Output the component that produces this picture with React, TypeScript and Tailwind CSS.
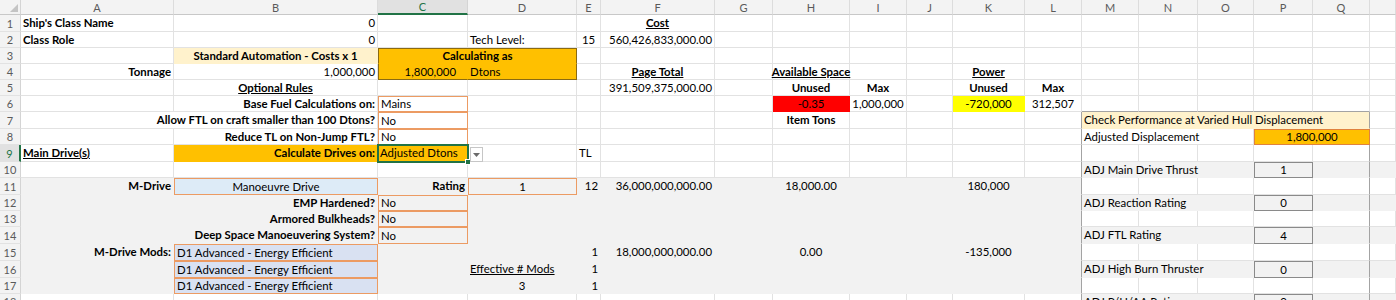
import React from 'react';
import { twMerge } from 'tailwind-merge';

type Cell = { t?: React.ReactNode; c?: string; x?: React.ReactNode };

const COLS =
  'grid grid-cols-[21px_153px_204px_90px_109px_24px_114px_58px_77px_57px_46px_72px_57px_57px_59px_56px_59px_57px_minmax(0,1fr)]';

const BASE =
  'flex items-center min-w-0 whitespace-nowrap px-[2px] border-r border-b border-[#e2e2e2] text-black';
const GRAY = 'bg-[#f2f2f2] border-[#f2f2f2]';
const BAND = 'bg-[#f2f2f2] border-[#f2f2f2]';
const PE = 'border-r-[#a3a3a3]';
const PT = 'border-b-[#a3a3a3]';
const BOX = 'border-l border-t border-[#ec9b63]';
const GBOX = 'bg-[#f2f2f2] border-l border-t border-[#ec9b63]';
const VBOX = 'justify-center bg-[#f2f2f2] border-l border-t border-[#8a8a8a]';
const CB = 'justify-center font-bold';
const RT = 'justify-end';
const CT = 'justify-center';

const e: Cell = {};
const g: Cell = { c: GRAY };
const gpe: Cell = { c: 'bg-[#f2f2f2] border-[#f2f2f2] border-r-[#a3a3a3]' };
const pe: Cell = { c: PE };
const bandPe: Cell = { c: 'bg-[#f2f2f2] border-[#f2f2f2] border-r-[#a3a3a3]' };
const band: Cell = { c: BAND };

function Selection() {
  return (
    <>
      <span className="pointer-events-none absolute -left-px -top-px -right-[2px] -bottom-[2px] border-2 border-[#217346]" />
      <span className="absolute -right-[4px] -bottom-[4px] h-[6px] w-[6px] bg-[#217346] border border-white" />
      <span className="absolute left-[calc(100%+3px)] top-[2px] h-[15px] w-[13px] bg-white border border-[#c6c6c6] flex items-center justify-center">
        <svg width="7" height="4" viewBox="0 0 7 4">
          <path d="M0 0H7L3.5 4Z" fill="#6b6b6b" />
        </svg>
      </span>
    </>
  );
}

function Row({ n, h, cells, sel }: { n: number; h: string; cells: Cell[]; sel?: boolean }) {
  return (
    <div className={twMerge(COLS, h)}>
      <div
        className={
          sel
            ? 'flex items-center justify-center text-[11px] bg-[#e1e1e1] text-[#217346] border-r-2 border-r-[#217346] border-b border-b-[#e2e2e2]'
            : 'flex items-center justify-center text-[11px] bg-[#f3f3f3] text-[#5a5a5a] border-r border-b border-r-[#d4d4d4] border-b-[#e2e2e2]'
        }
      >
        {n}
      </div>
      {cells.map((cell, i) => (
        <div key={i} className={twMerge(BASE, cell.c)}>
          {cell.t}
          {cell.x}
        </div>
      ))}
    </div>
  );
}

const LETTERS = ['A', 'B', 'C', 'D', 'E', 'F', 'G', 'H', 'I', 'J', 'K', 'L', 'M', 'N', 'O', 'P', 'Q', ''];

const rows: { h: string; cells: Cell[]; sel?: boolean }[] = [
  {
    h: 'h-[17px]',
    cells: [
      { t: "Ship's Class Name", c: 'font-bold' },
      { t: '0', c: RT },
      e, e, e,
      { t: 'Cost', c: 'justify-center font-bold underline' },
      e, e, e, e, e, e,
      e, e, e, e, e,
      e,
    ],
  },
  {
    h: 'h-[16px]',
    cells: [
      { t: 'Class Role', c: 'font-bold' },
      { t: '0', c: RT },
      e,
      { t: 'Tech Level:' },
      { t: '15', c: CT },
      { t: '560,426,833,000.00', c: RT },
      e, e, e, e, e, e,
      e, e, e, e, e,
      e,
    ],
  },
  {
    h: 'h-[16px]',
    cells: [
      e,
      { t: 'Standard Automation - Costs x 1', c: 'justify-center font-bold bg-[#fff2cc] border-[#fff2cc]' },
      {
        t: 'Calculating as',
        c: 'col-span-2 justify-center font-bold bg-[#ffc000] border-l border-t border-[#8a6a12] border-b-[#ffc000]',
      },
      e, e,
      e, e, e, e, e, e,
      e, e, e, e, e,
      e,
    ],
  },
  {
    h: 'h-[16px]',
    cells: [
      { t: 'Tonnage', c: 'justify-end font-bold' },
      { t: '1,000,000', c: RT },
      { t: '1,800,000', c: 'justify-end pr-[11px] bg-[#ffc000] border-l border-[#8a6a12] border-r-[#ffc000]' },
      { t: 'Dtons', c: 'bg-[#ffc000] border-[#8a6a12]' },
      e,
      { t: 'Page Total', c: 'justify-center font-bold underline' },
      e,
      { t: 'Available Space', c: 'justify-center font-bold underline' },
      e, e,
      { t: 'Power', c: 'justify-center font-bold underline' },
      e,
      e, e, e, e, e,
      e,
    ],
  },
  {
    h: 'h-[16px]',
    cells: [
      e,
      { t: 'Optional Rules', c: 'justify-center font-bold underline' },
      e, e, e,
      { t: '391,509,375,000.00', c: RT },
      e,
      { t: 'Unused', c: CB },
      { t: 'Max', c: CB },
      e,
      { t: 'Unused', c: CB },
      { t: 'Max', c: CB },
      e, e, e, e, e,
      e,
    ],
  },
  {
    h: 'h-[16px]',
    cells: [
      e,
      { t: 'Base Fuel Calculations on:', c: 'justify-end font-bold' },
      { t: 'Mains', c: BOX },
      e, e, e, e,
      { t: '-0.35', c: 'justify-center bg-[#ff0000] border-[#ff0000]' },
      { t: '1,000,000', c: CT },
      e,
      { t: '-720,000', c: 'justify-center bg-[#ffff00] border-[#ffff00]' },
      { t: '312,507', c: CT },
      { c: PT }, { c: PT }, { c: PT }, { c: PT }, { c: PT },
      e,
    ],
  },
  {
    h: 'h-[17px]',
    cells: [
      { t: 'Allow FTL on craft smaller than 100 Dtons?', c: 'col-span-2 justify-end font-bold' },
      { t: 'No', c: BOX },
      e, e, e, e,
      { t: 'Item Tons', c: CB },
      e, e, e,
      pe,
      {
        t: 'Check Performance at Varied Hull Displacement',
        c: 'col-span-5 bg-[#fff2cc] border-[#fff2cc] border-r-[#a3a3a3]',
      },
      e,
    ],
  },
  {
    h: 'h-[16px]',
    cells: [
      e,
      { t: 'Reduce TL on Non-Jump FTL?', c: 'justify-end font-bold' },
      { t: 'No', c: BOX },
      e, e, e, e, e, e, e, e,
      pe,
      { t: 'Adjusted Displacement', c: 'col-span-3' },
      { t: '1,800,000', c: 'col-span-2 justify-center bg-[#ffc000] border-l border-t border-[#e0823d]' },
      e,
    ],
  },
  {
    h: 'h-[17px]',
    sel: true,
    cells: [
      { t: 'Main Drive(s)', c: 'font-bold underline' },
      { t: 'Calculate Drives on:', c: 'justify-end font-bold bg-[#ffc000] border-[#ffc000]' },
      { t: 'Adjusted Dtons', c: 'relative bg-[#ffc000] border-[#ffc000]', x: <Selection /> },
      e,
      { t: 'TL' },
      e, e, e, e, e, e,
      pe,
      e, e, e, e,
      pe,
      e,
    ],
  },
  {
    h: 'h-[16px]',
    cells: [
      e, e, e, e, e, e, e, e, e, e, e,
      pe,
      { t: 'ADJ Main Drive Thrust', c: 'col-span-3 ' + BAND },
      { t: '1', c: VBOX },
      bandPe,
      band,
    ],
  },
  {
    h: 'h-[17px]',
    cells: [
      { t: 'M-Drive', c: 'justify-end font-bold ' + GRAY },
      { t: 'Manoeuvre Drive', c: 'justify-center bg-[#ddebf7] border-l border-t border-[#ec9b63]' },
      { t: 'Rating', c: 'justify-end font-bold ' + GRAY },
      { t: '1', c: 'justify-center ' + GBOX },
      { t: '12', c: 'justify-end ' + GRAY },
      { t: '36,000,000,000.00', c: 'justify-end ' + GRAY },
      g,
      { t: '18,000.00', c: 'justify-center ' + GRAY },
      g, g,
      { t: '180,000', c: 'justify-center ' + GRAY },
      gpe,
      e, e, e, e,
      pe,
      e,
    ],
  },
  {
    h: 'h-[16px]',
    cells: [
      g,
      { t: 'EMP Hardened?', c: 'justify-end font-bold ' + GRAY },
      { t: 'No', c: GBOX },
      g, g, g, g, g, g, g, g,
      gpe,
      { t: 'ADJ Reaction Rating', c: 'col-span-3 ' + BAND },
      { t: '0', c: VBOX },
      bandPe,
      band,
    ],
  },
  {
    h: 'h-[16px]',
    cells: [
      g,
      { t: 'Armored Bulkheads?', c: 'justify-end font-bold ' + GRAY },
      { t: 'No', c: GBOX },
      g, g, g, g, g, g, g, g,
      gpe,
      e, e, e, e,
      pe,
      e,
    ],
  },
  {
    h: 'h-[17px]',
    cells: [
      g,
      { t: 'Deep Space Manoeuvering System?', c: 'justify-end font-bold ' + GRAY },
      { t: 'No', c: GBOX },
      g, g, g, g, g, g, g, g,
      gpe,
      { t: 'ADJ FTL Rating', c: 'col-span-3 ' + BAND },
      { t: '4', c: VBOX },
      bandPe,
      band,
    ],
  },
  {
    h: 'h-[17px]',
    cells: [
      { t: 'M-Drive Mods:', c: 'justify-end font-bold ' + GRAY },
      { t: 'D1 Advanced - Energy Efficient', c: 'bg-[#d9e1f2] border-l border-t border-[#ec9b63]' },
      g, g,
      { t: '1', c: 'justify-end ' + GRAY },
      { t: '18,000,000,000.00', c: 'justify-end ' + GRAY },
      g,
      { t: '0.00', c: 'justify-center ' + GRAY },
      g, g,
      { t: '-135,000', c: 'justify-center ' + GRAY },
      gpe,
      e, e, e, e,
      pe,
      e,
    ],
  },
  {
    h: 'h-[17px]',
    cells: [
      g,
      { t: 'D1 Advanced - Energy Efficient', c: 'bg-[#d9e1f2] border-l border-t border-[#ec9b63]' },
      g,
      { t: 'Effective # Mods', c: 'underline ' + GRAY },
      { t: '1', c: 'justify-end ' + GRAY },
      g, g, g, g, g, g,
      gpe,
      { t: 'ADJ High Burn Thruster', c: 'col-span-3 ' + BAND },
      { t: '0', c: VBOX },
      bandPe,
      band,
    ],
  },
  {
    h: 'h-[16px]',
    cells: [
      g,
      { t: 'D1 Advanced - Energy Efficient', c: 'bg-[#d9e1f2] border-l border-t border-[#ec9b63]' },
      g,
      { t: '3', c: 'justify-center ' + GRAY },
      { t: '1', c: 'justify-end ' + GRAY },
      g, g, g, g, g, g,
      gpe,
      e, e, e, e,
      pe,
      e,
    ],
  },
  {
    h: 'h-[16px]',
    cells: [
      e, e, e, e, e, e, e, e, e, e, e,
      pe,
      { t: 'ADJ P/H/AA Rating', c: 'col-span-3 ' + BAND },
      { t: '0', c: VBOX },
      bandPe,
      band,
    ],
  },
];

export default function App() {
  return (
    <div className="w-[1396px] h-[300px] overflow-hidden bg-white font-['Lato',sans-serif] text-[11.4px] leading-none text-black">
      <div className={twMerge(COLS, 'h-[15px]')}>
        <div className="relative bg-[#f3f3f3] border-r border-b border-r-[#d4d4d4] border-b-[#c8c8c8]">
          <svg className="absolute right-[2px] bottom-[2px]" width="8" height="8" viewBox="0 0 8 8">
            <path d="M8 0V8H0Z" fill="#c4c4c4" />
          </svg>
        </div>
        {LETTERS.map((l, i) =>
          l === 'C' ? (
            <div
              key={i}
              className="flex items-center justify-center text-[11px] bg-[#e1e1e1] text-[#217346] border-r border-r-[#d4d4d4] border-b-2 border-b-[#217346]"
            >
              {l}
            </div>
          ) : (
            <div
              key={i}
              className="flex items-center justify-center text-[11px] bg-[#f3f3f3] text-[#5a5a5a] border-r border-b border-r-[#dcdcdc] border-b-[#c8c8c8]"
            >
              {l}
            </div>
          )
        )}
      </div>
      {rows.map((r, i) => (
        <Row key={i} n={i + 1} h={r.h} cells={r.cells} sel={r.sel} />
      ))}
    </div>
  );
}
